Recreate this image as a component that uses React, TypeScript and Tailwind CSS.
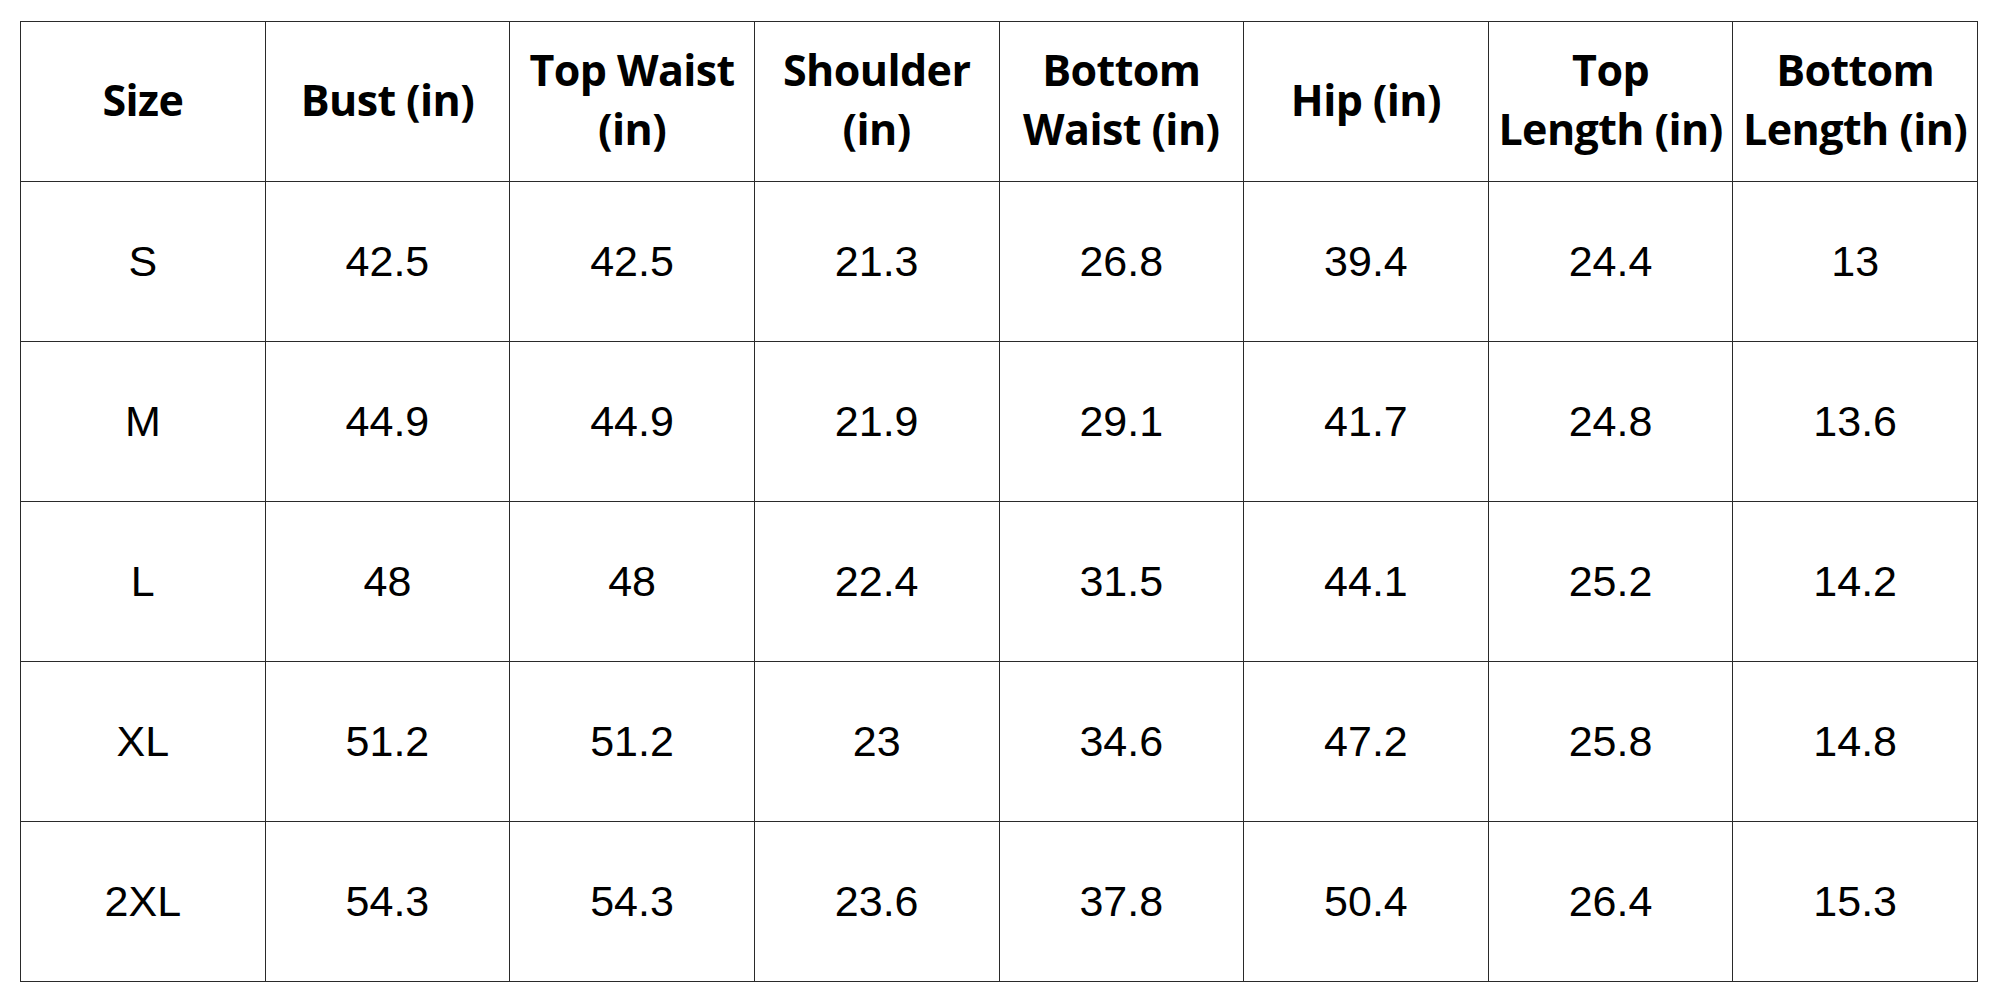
import React from "react";

const HEADERS = [
  "Size",
  "Bust (in)",
  "Top Waist\n(in)",
  "Shoulder\n(in)",
  "Bottom\nWaist (in)",
  "Hip (in)",
  "Top\nLength (in)",
  "Bottom\nLength (in)",
];

const ROWS = [
  ["S", "42.5", "42.5", "21.3", "26.8", "39.4", "24.4", "13"],
  ["M", "44.9", "44.9", "21.9", "29.1", "41.7", "24.8", "13.6"],
  ["L", "48", "48", "22.4", "31.5", "44.1", "25.2", "14.2"],
  ["XL", "51.2", "51.2", "23", "34.6", "47.2", "25.8", "14.8"],
  ["2XL", "54.3", "54.3", "23.6", "37.8", "50.4", "26.4", "15.3"],
];

export default function App() {
  return (
    <div className="min-h-screen w-full bg-white pl-[20px] pt-[21px]">
      <div className="grid w-[1958px] grid-cols-8 border-l border-t border-[#2a2a2a]">
        {HEADERS.map((h) => (
          <div
            key={h}
            className="flex h-[160px] items-center justify-center whitespace-pre-line border-b border-r border-[#2a2a2a] pb-[5px] text-center font-['Open_Sans',sans-serif] text-[43px] font-bold leading-[59px] tracking-[-0.6px] text-black"
          >
            {h}
          </div>
        ))}
        {ROWS.map((r) =>
          r.map((v, i) => (
            <div
              key={r[0] + i}
              className="flex h-[160px] items-center justify-center border-b border-r border-[#2a2a2a] font-['Liberation_Sans',Arial,sans-serif] text-[43px] text-black"
            >
              {v}
            </div>
          ))
        )}
      </div>
    </div>
  );
}
